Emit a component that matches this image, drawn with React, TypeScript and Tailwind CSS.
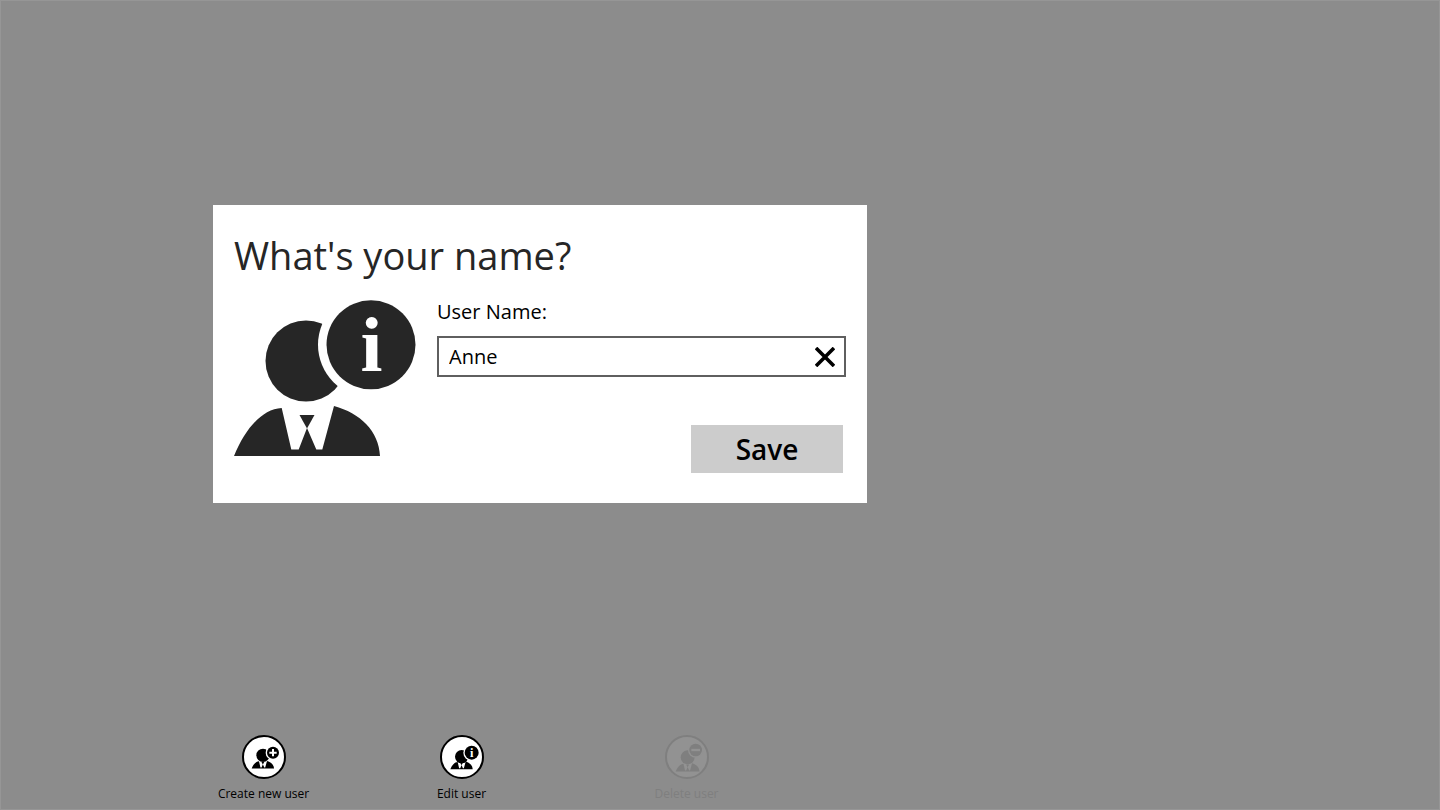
import { useState } from "react";

type Badge = "plus" | "info" | "minus";

// Large drawing used in the dialog
function UserInfoIcon() {
  return (
    <svg
      viewBox="0 0 182 156"
      className="h-[156px] w-[182px] shrink-0 text-[#262626]"
      fill="currentColor"
      aria-hidden="true"
    >
      <circle cx="72" cy="61" r="40.5" />
      <path d="M0 156C11 129 28 109 47.7 108L57.3 149.5H64.7L73 128L82.3 149.5H88.3L100 106C126 113 145 131 146 156Z" />
      <path d="M65.5 115H80.5L73 128.5Z" />
      <circle cx="137" cy="44.8" r="53" fill="#ffffff" />
      <circle cx="137" cy="44.8" r="44.5" />
      <text
        x="137.5"
        y="70.5"
        fontSize="79"
        fontWeight="700"
        fontFamily="'Liberation Serif', serif"
        textAnchor="middle"
        fill="#ffffff"
      >
        i
      </text>
    </svg>
  );
}

const glyphs = {
  plus: {
    head: { cx: 57, cy: 55, r: 20 },
    badge: { cx: 87, cy: 47, r: 18 },
    body: "translate(23 23) scale(0.46)",
  },
  info: {
    head: { cx: 59, cy: 59, r: 20 },
    badge: { cx: 89, cy: 47, r: 21 },
    body: "translate(25 25) scale(0.46)",
  },
  minus: {
    head: { cx: 62, cy: 61, r: 21 },
    badge: { cx: 86, cy: 39, r: 19 },
    body: "translate(26 27) scale(0.49)",
  },
};

// Small drawing that fills the ring of an app bar button
function CommandIcon({ badge, cutout }: { badge: Badge; cutout: string }) {
  const { head, badge: b, body } = glyphs[badge];

  return (
    <svg
      viewBox="0 0 120 120"
      className="size-10"
      fill="currentColor"
      aria-hidden="true"
    >
      <circle cx={head.cx} cy={head.cy} r={head.r} />
      <g transform={body}>
        <path d="M0 156C11 129 28 109 47.7 108L57.3 149.5H64.7L73 128L82.3 149.5H88.3L100 106C126 113 145 131 146 156Z" />
        <path d="M64 113H82L73 130Z" />
      </g>
      <circle cx={b.cx} cy={b.cy} r={b.r + 4} fill={cutout} />
      <circle cx={b.cx} cy={b.cy} r={b.r} />
      {badge === "info" && (
        <text
          x={b.cx}
          y={b.cy + 12}
          fontSize="37"
          fontWeight="700"
          fontFamily="'Liberation Serif', serif"
          textAnchor="middle"
          fill={cutout}
        >
          i
        </text>
      )}
      {badge === "plus" && (
        <path d="M76 47H98M87 36V58" stroke={cutout} strokeWidth="6" />
      )}
      {badge === "minus" && (
        <path d="M73 39H99" stroke={cutout} strokeWidth="7" />
      )}
    </svg>
  );
}

interface AppBarButtonProps {
  label: string;
  badge: Badge;
  disabled?: boolean;
}

function AppBarButton({ label, badge, disabled }: AppBarButtonProps) {
  return (
    <button
      type="button"
      disabled={disabled}
      className={
        disabled
          ? "flex w-[101px] flex-col items-center gap-[5px] text-[#7f7f7f]"
          : "flex w-[101px] cursor-pointer flex-col items-center gap-[5px] text-black"
      }
    >
      <span
        className={
          disabled
            ? "flex size-11 items-center justify-center rounded-full border-2 border-current bg-[#929292]"
            : "flex size-11 items-center justify-center rounded-full border-2 border-current bg-white"
        }
      >
        <CommandIcon badge={badge} cutout={disabled ? "#929292" : "#ffffff"} />
      </span>
      <span className="text-[12px] leading-5 whitespace-nowrap">{label}</span>
    </button>
  );
}

export default function App() {
  const [name, setName] = useState("Anne");

  return (
    <div className="flex min-h-screen flex-col border border-[#969696] bg-[#8c8c8c] px-[212px] font-['Open_Sans','Noto_Sans',sans-serif] text-black">
      <form
        onSubmit={(e) => e.preventDefault()}
        className="mt-[204px] w-full max-w-[654px] bg-white px-[21px] pt-[22px] pb-[30px]"
      >
        <h1 className="text-[38px] leading-[56px] text-[#262626]">
          What's your name?
        </h1>
        <div className="mt-[17px] flex gap-[21px]">
          <UserInfoIcon />
          <div className="flex grow flex-col">
            <label htmlFor="user-name" className="text-[20px] leading-6">
              User Name:
            </label>
            <div className="mt-3 flex h-[41px] items-center border-2 border-[#5f5f5f]">
              <input
                id="user-name"
                type="text"
                value={name}
                onChange={(e) => setName(e.target.value)}
                className="min-w-0 grow px-[10px] text-[20px] leading-6 outline-none"
              />
              <button
                type="button"
                aria-label="Clear"
                onClick={() => setName("")}
                className="flex w-[38px] cursor-pointer justify-center"
              >
                <svg viewBox="0 0 20 20" className="size-5" aria-hidden="true">
                  <path
                    d="M1 1L19 19M19 1L1 19"
                    stroke="currentColor"
                    strokeWidth="3.6"
                  />
                </svg>
              </button>
            </div>
            <button
              type="submit"
              className="mt-12 mr-[3px] h-12 w-[152px] cursor-pointer self-end bg-[#cccccc] text-[28px] leading-8 font-semibold"
            >
              Save
            </button>
          </div>
        </div>
      </form>
      <footer className="mt-auto flex pb-[5px]">
        <AppBarButton label="Create new user" badge="plus" />
        <div className="ml-[97px]">
          <AppBarButton label="Edit user" badge="info" />
        </div>
        <div className="ml-[124px]">
          <AppBarButton label="Delete user" badge="minus" disabled />
        </div>
      </footer>
    </div>
  );
}
